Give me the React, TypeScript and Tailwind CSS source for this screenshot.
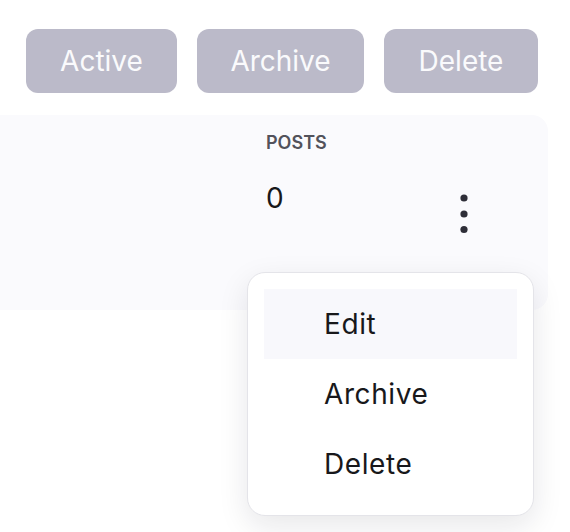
import React from "react";

export default function App() {
  const font = { fontFamily: "Inter, 'Noto Sans', sans-serif" };
  return (
    <div className="relative w-[570px] h-[532px] bg-white overflow-hidden" style={font}>
      <div className="flex gap-[20px] pl-[26px] pt-[29px]">
        <button className="h-[64px] w-[151px] rounded-[12px] bg-[#bbbac9] text-[#fafafc] text-[28px] leading-none flex items-center justify-center">
          Active
        </button>
        <button className="h-[64px] w-[167px] rounded-[12px] bg-[#bbbac9] text-[#fafafc] text-[28px] leading-none flex items-center justify-center">
          Archive
        </button>
        <button className="h-[64px] w-[154px] rounded-[12px] bg-[#bbbac9] text-[#fafafc] text-[28px] leading-none flex items-center justify-center">
          Delete
        </button>
      </div>

      <div className="mt-[22px] w-[548px] h-[195px] bg-[#fafafd] rounded-r-[16px] flex pl-[266px] pt-[16px]">
        <div className="w-[194px] flex flex-col">
          <div className="text-[18px] leading-[24px] font-semibold text-[#52525b]">POSTS</div>
          <div className="mt-[25px] text-[28px] leading-[36px] text-[#18181b]">0</div>
        </div>
        <svg className="mt-[63px]" width="8" height="40" viewBox="0 0 8 40">
          <circle cx="4" cy="4" r="3.6" fill="#2e2e38" />
          <circle cx="4" cy="20" r="3.6" fill="#2e2e38" />
          <circle cx="4" cy="35.5" r="3.6" fill="#2e2e38" />
        </svg>
      </div>

      <div className="absolute left-[247px] top-[272px] w-[287px] bg-white border border-[#e4e4e9] rounded-[18px] shadow-[0_10px_30px_rgba(20,20,40,0.10)] p-[16px]">
        <div className="h-[70px] bg-[#f8f8fc] flex items-center pl-[60px] text-[28px] tracking-[0.6px] text-[#18181b]">Edit</div>
        <div className="h-[70px] flex items-center pl-[60px] text-[28px] tracking-[0.6px] text-[#18181b]">Archive</div>
        <div className="h-[70px] flex items-center pl-[60px] text-[28px] tracking-[0.6px] text-[#18181b]">Delete</div>
      </div>
    </div>
  );
}
